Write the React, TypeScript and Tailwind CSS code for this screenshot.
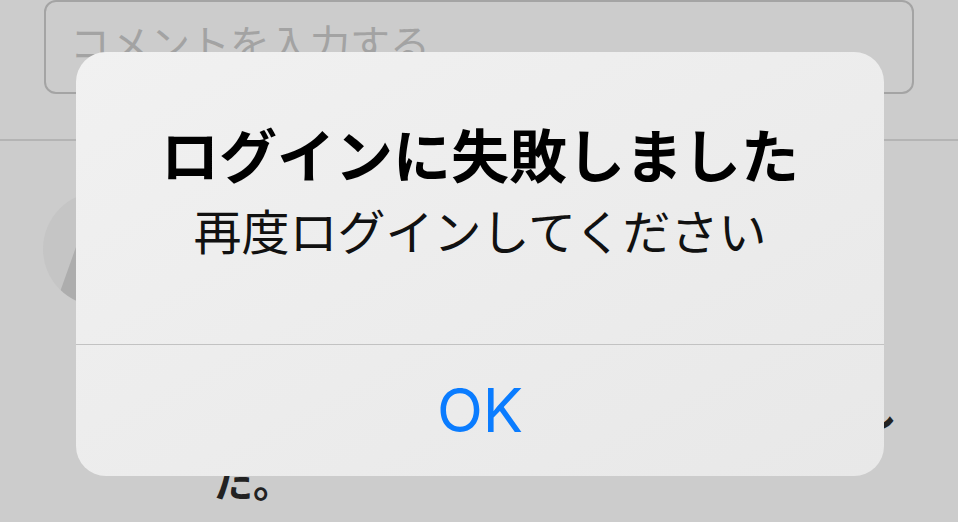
export default function App() {
  return (
    <div className="relative h-[522px] w-[958px] overflow-hidden bg-[#cccccc] font-['Noto_Sans_CJK_JP',sans-serif]">
      {/* comment input */}
      <div className="mx-[44px] h-[94px] rounded-[12px] border-2 border-[#a4a4a4] pl-[24px] pt-[20px] text-[40px] leading-none text-[#a3a3a3]">
        コメントを入力する
      </div>
      <div className="mt-[45px] h-[2px] bg-[#b4b4b4]" />

      {/* comment row */}
      <div className="mt-[51px] flex gap-[56px] pl-[43px]">
        <div className="h-[114px] w-[114px] shrink-0 overflow-hidden rounded-full bg-[#c5c5c5]">
          <svg viewBox="0 0 114 114" className="h-full w-full">
            <polygon points="33,55 12,114 114,114 114,55" fill="#adadad" />
          </svg>
        </div>
        <div className="whitespace-nowrap text-[40px] font-bold leading-[64px] text-[#222]">
          <div>ユーザー</div>
          <div>とても分かりやすい説明</div>
          <div>でした。</div>
          <div className="-mt-[6px] pl-[5px]">いつも丁寧に、ありがとうございまし</div>
          <div className="mt-[6px]">た。</div>
        </div>
      </div>

      {/* alert */}
      <div className="absolute left-[76px] top-[52px] flex h-[424px] w-[808px] flex-col rounded-[30px] bg-linear-to-br from-[#f1f1f1] to-[#e8e8e8]">
        <div className="flex h-[292px] flex-col items-center pt-[72px]">
          <h2 className="text-[58px] font-bold leading-none text-black">ログインに失敗しました</h2>
          <p className="mt-[23px] text-[48px] leading-none text-[#111]">再度ログインしてください</p>
        </div>
        <div className="h-px bg-[#c2c2c2]" />
        <button className="flex flex-1 items-center justify-center pb-[2px] font-['Inter',sans-serif] text-[60px] leading-none text-[#0a7cff]">
          OK
        </button>
      </div>
    </div>
  );
}
